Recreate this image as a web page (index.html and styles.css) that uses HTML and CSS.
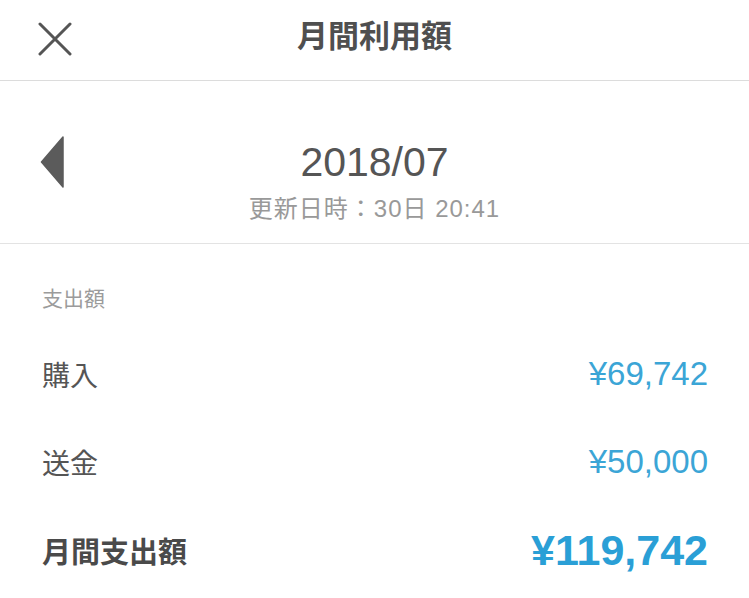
FILE: index.html
```html
<!doctype html>
<html lang="ja">

<head>
  <meta charset="utf-8">
  <title>月間利用額</title>
  <link rel="stylesheet" href="styles.css">
</head>

<body>
  <div class="screen">
    <!-- ヘッダー -->
    <div class="top-bar">
      <button class="close-button" type="button" aria-label="閉じる">
        <svg width="34" height="34" viewBox="0 0 34 34">
          <path d="M2 2 L32 32 M32 2 L2 32" stroke="#555" stroke-width="3" stroke-linecap="round" fill="none"/>
        </svg>
      </button>
      <div class="top-title">月間利用額</div>
      <div></div>
    </div>

    <!-- 対象月 -->
    <div class="month-block">
      <button class="prev-button" type="button" aria-label="前の月">
        <svg width="25" height="52" viewBox="0 0 25 52">
          <path d="M23 1 L23 51 L1.5 26 Z" fill="#5b5b5b" stroke="#5b5b5b" stroke-width="1.5" stroke-linejoin="round"/>
        </svg>
      </button>
      <div class="month-info">
        <div class="month-label">2018/07</div>
        <div class="updated-at">更新日時：30日 20:41</div>
      </div>
      <div></div>
    </div>

    <!-- 支出額 -->
    <div class="spend-list">
      <div class="section-label">支出額</div>
      <div class="spend-row">
        <span class="row-name">購入</span>
        <span class="row-amount">¥69,742</span>
      </div>
      <div class="spend-row">
        <span class="row-name">送金</span>
        <span class="row-amount">¥50,000</span>
      </div>
      <div class="spend-row total-row">
        <span class="row-name">月間支出額</span>
        <span class="row-amount">¥119,742</span>
      </div>
    </div>
  </div>
</body>

</html>
```

FILE: styles.css
```css
body {
  margin: 0;
  background-color: #fff;
}

body * {
  font-family: "Liberation Sans", "Noto Sans CJK JP", sans-serif;
}

.screen {
  width: 749px;
  height: 598px;
  overflow: hidden;
}

button {
  padding: 0;
  border: none;
  background: transparent;
  cursor: pointer;
}

/* ヘッダー */
.top-bar {
  display: grid;
  grid-template-columns: 1fr auto 1fr;
  align-items: center;
  height: 81px;
  padding: 0 38px 8px;
  box-sizing: border-box;
  border-bottom: 1px solid #dcdcdc;
}

.close-button {
  justify-self: start;
  width: 34px;
  height: 34px;
  display: flex;
  margin-top: 6px;
}

.top-title {
  font-size: 31px;
  font-weight: bold;
  color: #4f4f4f;
  line-height: 40px;
  margin-top: 2px;
}

/* 対象月 */
.month-block {
  display: grid;
  grid-template-columns: 1fr auto 1fr;
  height: 163px;
  box-sizing: border-box;
  border-bottom: 1px solid #e3e3e3;
  padding-left: 40px;
  padding-right: 40px;
}

.prev-button {
  justify-self: start;
  align-self: center;
  display: flex;
  width: 25px;
  height: 52px;
}

.month-info {
  padding-top: 57px;
  text-align: center;
}

.month-label {
  font-size: 41px;
  line-height: 48px;
  color: #555;
}

.updated-at {
  margin-top: 9px;
  font-size: 24px;
  line-height: 28px;
  letter-spacing: 1px;
  color: #999;
}

/* 支出額 */
.spend-list {
  padding: 40px 41px 0 42px;
}

.section-label {
  font-size: 21px;
  line-height: 30px;
  color: #9b9b9b;
  margin-bottom: 16px;
}

.spend-row {
  display: flex;
  justify-content: space-between;
  align-items: center;
  height: 88px;
}

.row-name {
  font-size: 28px;
  color: #555;
}

.row-amount {
  font-size: 33px;
  color: #3ba5d6;
}

.total-row .row-name {
  font-size: 29px;
  font-weight: bold;
  color: #4a4a4a;
}

.total-row .row-amount {
  font-size: 43px;
  font-weight: bold;
  color: #2a9fd6;
}
```
